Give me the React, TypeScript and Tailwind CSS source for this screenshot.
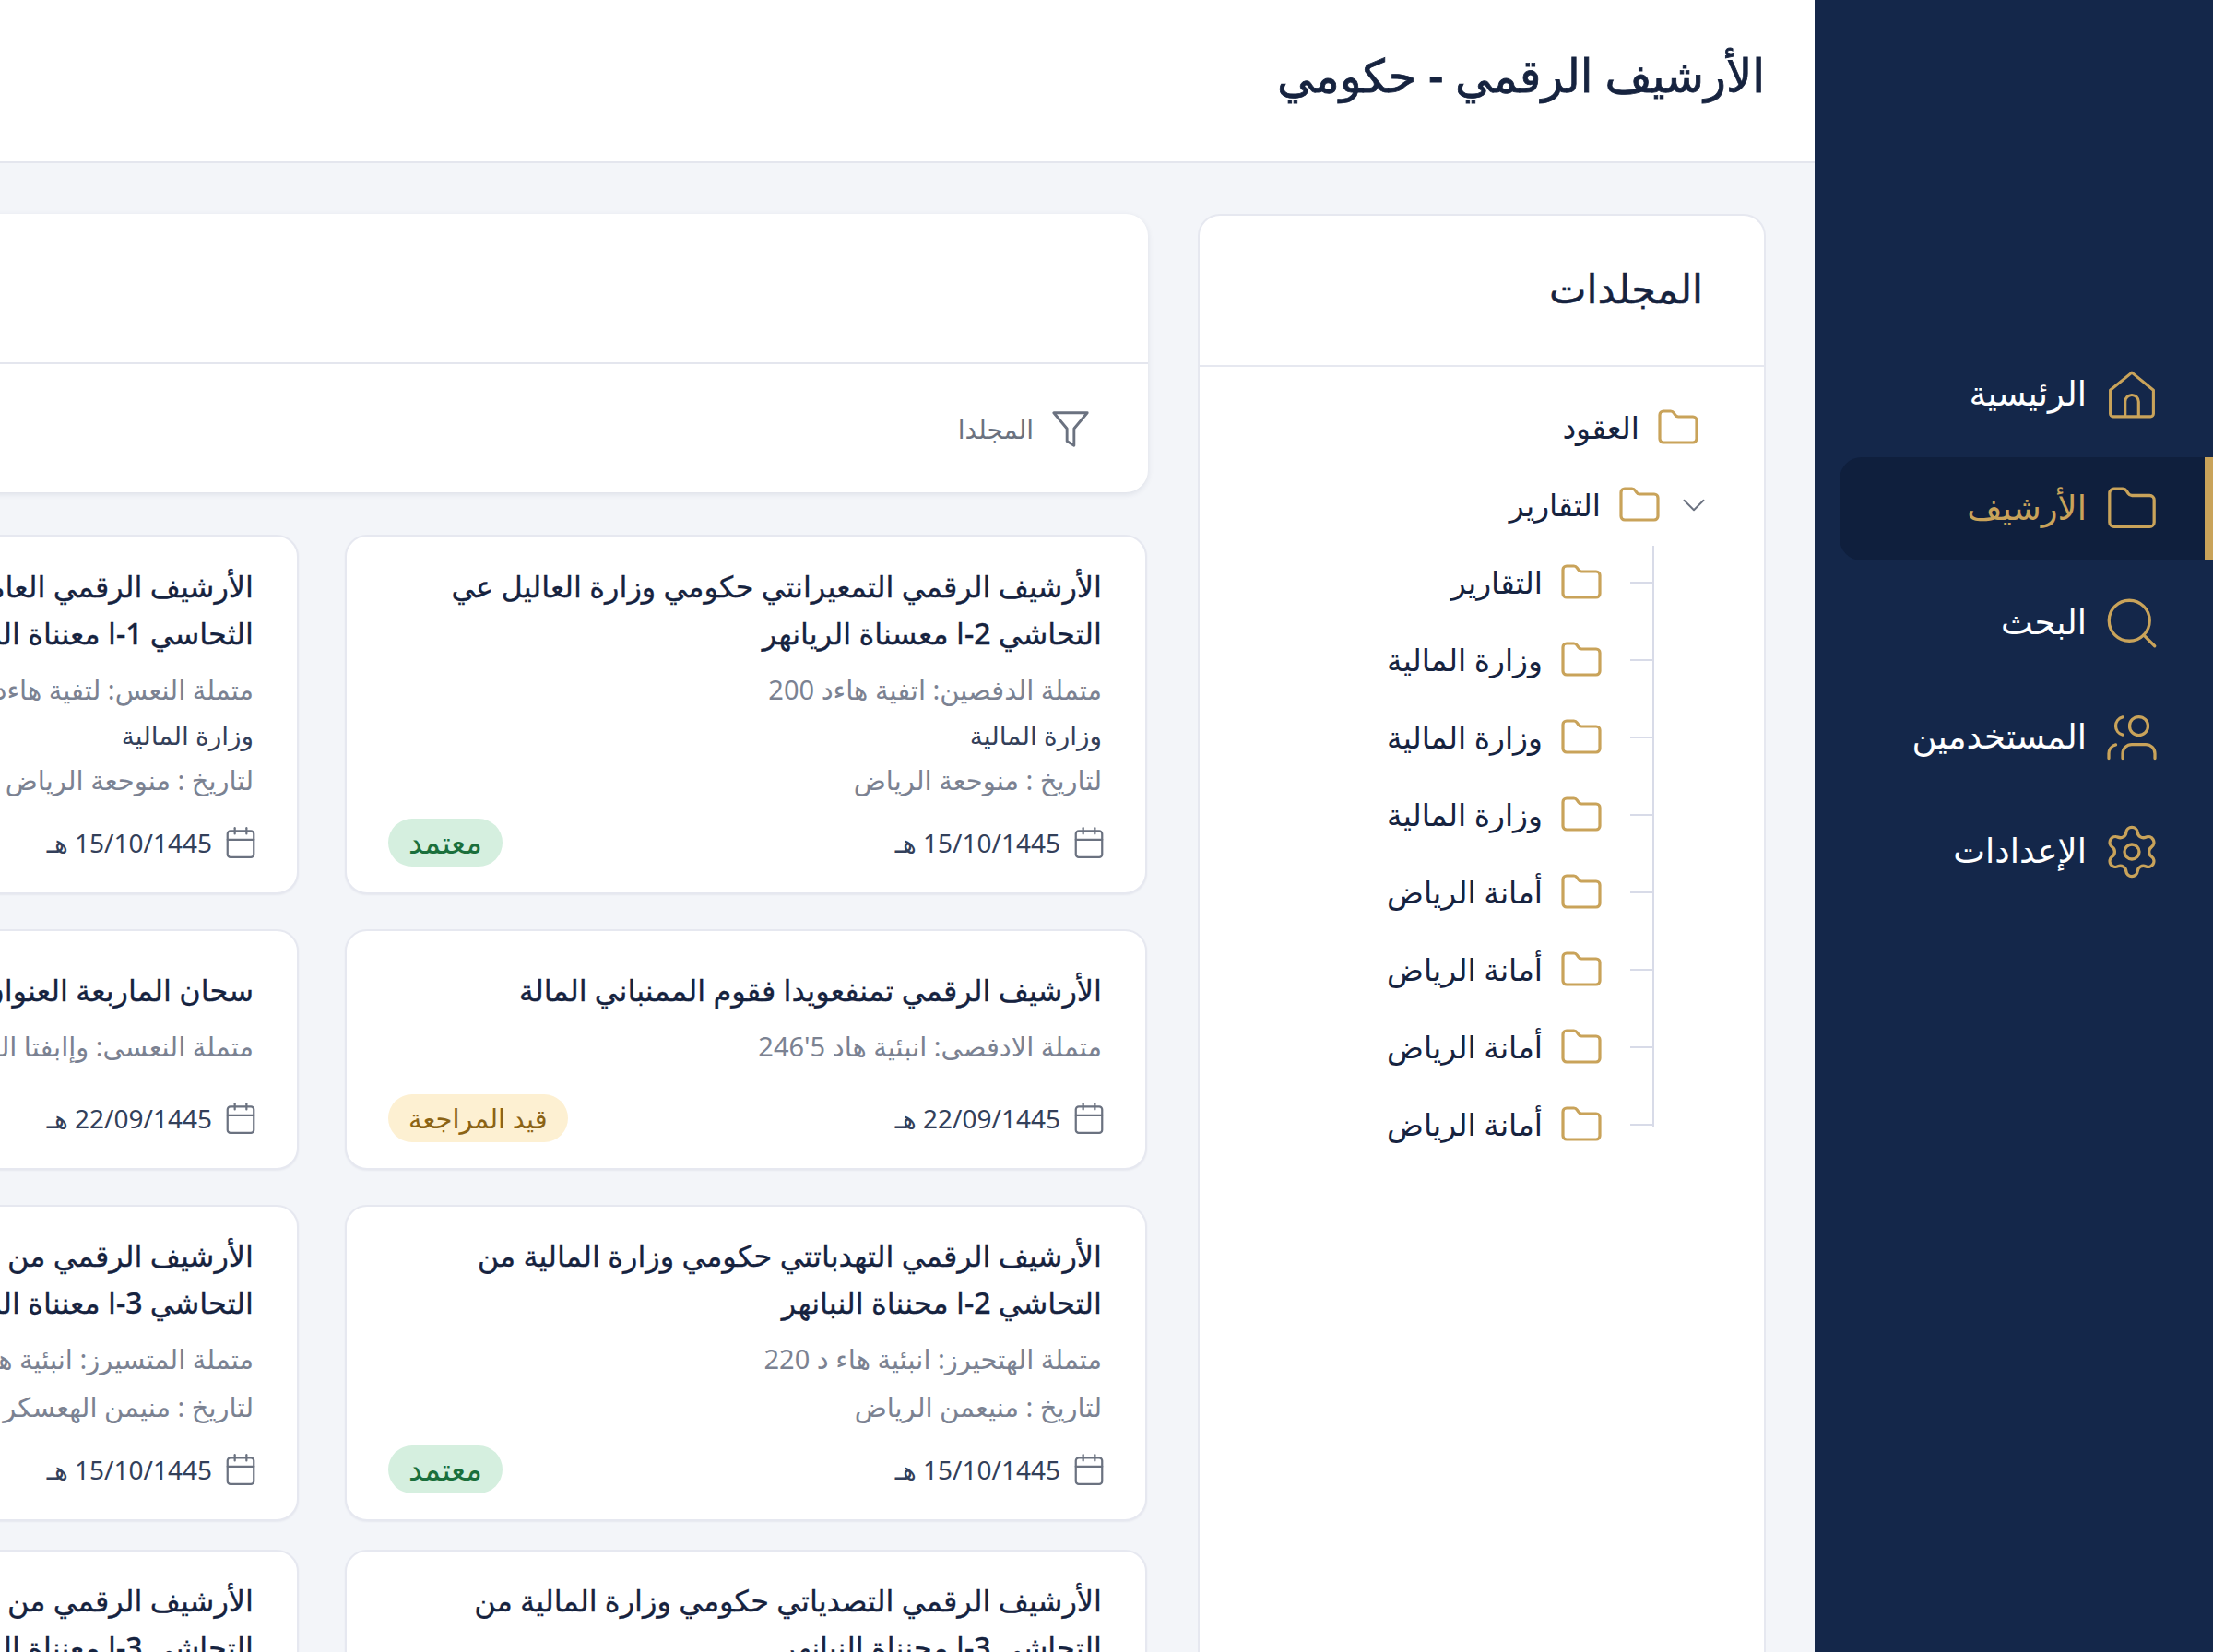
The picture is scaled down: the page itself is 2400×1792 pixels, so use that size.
import { Calendar, ChevronDown, Folder, Search, Settings, Users } from "lucide-react";

const font = "font-['Noto_Sans','Inter','DejaVu_Sans',sans-serif]";

function HomeIcon() {
  return (
    <svg viewBox="2.4 2 19.2 20" fill="none" stroke="currentColor" strokeWidth="1.2" strokeLinecap="round" strokeLinejoin="round" className="w-[50px] h-[52px]">
      <path d="M3 10.2 12 2.8l9 7.4v9.8a1.2 1.2 0 0 1-1.2 1.2H4.2A1.2 1.2 0 0 1 3 20v-9.8Z" />
      <path d="M9.2 21v-6a2.8 2.8 0 0 1 5.6 0v6" />
    </svg>
  );
}

function FunnelIcon() {
  return (
    <svg viewBox="0 0 24 24" fill="none" stroke="currentColor" strokeWidth="1.5" strokeLinejoin="round" className="w-[46px] h-[46px]">
      <path d="M2.5 3h19l-7.5 9v9.5l-4-2.5v-7z" />
    </svg>
  );
}

const navItems = [
  { label: "الرئيسية", icon: <HomeIcon /> },
  { label: "الأرشيف", icon: <Folder className="w-[58px] h-[58px] shrink-0" strokeWidth={1.35} />, active: true },
  { label: "البحث", icon: <Search className="w-[66px] h-[66px] shrink-0" strokeWidth={1.2} /> },
  { label: "المستخدمين", icon: <Users className="w-[60px] h-[60px] shrink-0 -scale-x-100" strokeWidth={1.3} /> },
  { label: "الإعدادات", icon: <Settings className="w-[64px] h-[64px] shrink-0" strokeWidth={1.25} /> },
];

const subFolders = [
  "التقارير",
  "وزارة المالية",
  "وزارة المالية",
  "وزارة المالية",
  "أمانة الرياض",
  "أمانة الرياض",
  "أمانة الرياض",
  "أمانة الرياض",
];

const cards = [
  {
    title: ["الأرشيف الرقمي التمعيرانتي حكومي وزارة العاليل عي", "التحاشي 2-ا معسناة الريانهر"],
    lines: [["متملة الدفصين: اتفية هاءد 200", "gray"], ["وزارة المالية", "dark"], ["لتاريخ : منوحعة الرياض", "gray"]],
    date: "15/10/1445",
    status: "معتمد",
    box: "h-[390px] pt-[28px]",
  },
  {
    title: ["الأرشيف الرقمي العامة حكومي وزارة المالية من", "الثحاسي 1-ا معنناة المالية والبيانات"],
    lines: [["متملة النعس: لتفية هاءد 180 للمالية", "gray"], ["وزارة المالية", "dark"], ["لتاريخ : منوحعة الرياض", "gray"]],
    date: "15/10/1445",
    status: "",
    box: "h-[390px] pt-[28px]",
  },
  {
    title: ["الأرشيف الرقمي تمنفعويدا فقوم الممنباني المالة"],
    lines: [["متملة الادفصى: انبئية هاد 5'246", "gray"]],
    date: "22/09/1445",
    status: "قيد المراجعة",
    box: "h-[261px] pt-[38px]",
  },
  {
    title: ["سحان الماربعة العنوان المالية للأرشيف"],
    lines: [["متملة النعسى: وإابفتا المالية والبيانات", "gray"]],
    date: "22/09/1445",
    status: "",
    box: "h-[261px] pt-[38px]",
  },
  {
    title: ["الأرشيف الرقمي التهدباتتي حكومي وزارة المالية من", "التحاشي 2-ا محنناة النبانهر"],
    lines: [["متملة الهتحيرز: انبئية هاء د 220", "gray"], ["لتاريخ : منيعمن الرياض", "gray"]],
    date: "15/10/1445",
    status: "معتمد",
    box: "h-[343px] pt-[27px]",
  },
  {
    title: ["الأرشيف الرقمي من وزارة المالية والإدارة العامة", "التحاشي 3-ا معنناة المالية والبيانات"],
    lines: [["متملة المتسيرز: انبئية هاء د 220 المالية", "gray"], ["لتاريخ : منيمن الهعسكر الرياض", "gray"]],
    date: "15/10/1445",
    status: "",
    box: "h-[343px] pt-[27px]",
  },
  {
    title: ["الأرشيف الرقمي التصدياتي حكومي وزارة المالية من", "التحاشي 3-ا محنناة النبانهر"],
    lines: [],
    date: "",
    status: "",
    box: "h-[343px] pt-[27px] -mt-[7px]",
  },
  {
    title: ["الأرشيف الرقمي من وزارة المالية والإدارة العامة", "التحاشي 3-ا معنناة المالية والبيانات"],
    lines: [],
    date: "",
    status: "",
    box: "h-[343px] pt-[27px] -mt-[7px]",
  },
];

function StatusBadge({ status }: { status: string }) {
  if (!status) return null;
  const approved = status === "معتمد";
  return (
    <span className={`h-[52px] px-[22px] rounded-full flex items-center ${approved ? "text-[33px] bg-[#d5efdf] text-[#1a6f3c]" : "text-[29px] bg-[#fdf0d2] text-[#8b6314]"}`}>
      {status}
    </span>
  );
}

function DocCard({ card }: { card: (typeof cards)[number] }) {
  return (
    <div className={`bg-white border-2 border-[#e6e8f0] shadow-[0_1px_2px_rgba(30,40,80,0.06)] rounded-[24px] pr-[47px] pl-[45px] pb-[28px] w-[870px] flex flex-col ${card.box}`}>
      <h3 className="text-[32px] leading-[51px] text-[#16233f] font-medium [-webkit-text-stroke:0.3px] whitespace-nowrap">
        {card.title.map((line, i) => (
          <span key={i} className="block">{line}</span>
        ))}
      </h3>
      <div className="mt-[10px] flex flex-col">
        {card.lines.map(([text, tone], i) => (
          <p
            key={i}
            className={tone === "dark" ? "text-[28px] leading-[46px] text-[#33405a]" : "text-[29px] leading-[52px] text-[#7b8292] whitespace-nowrap"}
          >
            {text}
          </p>
        ))}
      </div>
      {card.date && (
        <div className="mt-auto flex items-center justify-between h-[52px]">
          <div className="flex items-center gap-[12px] text-[#33405a]">
            <Calendar className="w-[38px] h-[38px] -mr-[5px] text-[#6b7280]" strokeWidth={1.4} />
            <span className="text-[28px]">{card.date} هـ</span>
          </div>
          <StatusBadge status={card.status} />
        </div>
      )}
    </div>
  );
}

function FolderRow({ label }: { label: string }) {
  return (
    <div className="h-[84px] flex items-center gap-[18px] text-[#16233f] text-[33px]">
      <Folder className="w-[48px] h-[48px] text-[#c9a35a]" strokeWidth={1.6} />
      <span>{label}</span>
    </div>
  );
}

export default function App() {
  return (
    <div dir="rtl" className={`${font} flex w-[2400px] h-[1792px] overflow-hidden bg-[#f3f5f9]`}>
      <aside className="w-[432px] shrink-0 bg-[#14274a] pt-[372px] pl-[27px]">
        <nav className="flex flex-col gap-[12px]">
          {navItems.map((item) => (
            <div
              key={item.label}
              className={`h-[112px] flex items-center gap-[22px] text-[37px] ${
                item.active
                  ? "bg-[#0f1f3d] rounded-l-[24px] border-r-[9px] border-[#c9a35a] pr-[52px] text-[#c9a35a]"
                  : "pr-[61px] text-white"
              }`}
            >
              <span className="text-[#c9a35a] flex items-center justify-center w-[54px] h-[54px]">{item.icon}</span>
              <span className="pb-[5px]">{item.label}</span>
            </div>
          ))}
        </nav>
      </aside>

      <div className="flex-1 min-w-0 flex flex-col">
        <header className="h-[177px] shrink-0 bg-white border-b-2 border-[#e4e6ee] flex items-center pr-[54px] pb-[12px]">
          <h1 className="text-[49.5px] font-medium text-[#16233f] [-webkit-text-stroke:0.8px]">الأرشيف الرقمي - حكومي</h1>
        </header>

        <main className="flex-1 min-h-0 flex gap-[54px] pt-[55px] pr-[53px]">
          <section className="w-[616px] shrink-0 bg-white border-2 border-[#e6e8f0] rounded-t-[24px] border-b-0">
            <div className="h-[164px] border-b-2 border-[#e6e8f0] flex items-center pr-[66px] pb-[4px]">
              <h2 className="text-[43px] font-medium text-[#16233f] [-webkit-text-stroke:0.4px]">المجلدات</h2>
            </div>
            <div className="pt-[24px] pr-[69px]">
              <FolderRow label="العقود" />
              <div className="flex items-center gap-[14px]">
                <ChevronDown className="w-[42px] h-[42px] -mr-[14px] text-[#6b7280]" strokeWidth={1.1} />
                <FolderRow label="التقارير" />
              </div>
              <div className="relative mr-[50px] pr-[55px]">
                <div className="absolute right-[0px] top-[2px] bottom-[40px] w-[2px] bg-[#d8dbe8]" />
                {subFolders.map((name, i) => (
                  <div key={i} className="relative">
                    <div className="absolute right-[-55px] top-[41px] w-[26px] h-[2px] bg-[#d8dbe8]" />
                    <FolderRow label={name} />
                  </div>
                ))}
              </div>
            </div>
          </section>

          <section className="w-[1800px] shrink-0">
            <div className="bg-white rounded-[24px] shadow-[0_2px_6px_rgba(30,40,80,0.1)] h-[302px]">
              <div className="h-[163px] border-b-2 border-[#e4e6ee]" />
              <div className="h-[139px] flex items-center gap-[17px] pr-[61px] text-[#6b7280] text-[28px]">
                <FunnelIcon />
                <span>المجلدا</span>
              </div>
            </div>
            <div className="mt-[46px] mr-[1px] grid grid-cols-[870px_870px] gap-x-[50px] gap-y-[38px]">
              {cards.map((card, i) => (
                <DocCard key={i} card={card} />
              ))}
            </div>
          </section>
        </main>
      </div>
    </div>
  );
}
